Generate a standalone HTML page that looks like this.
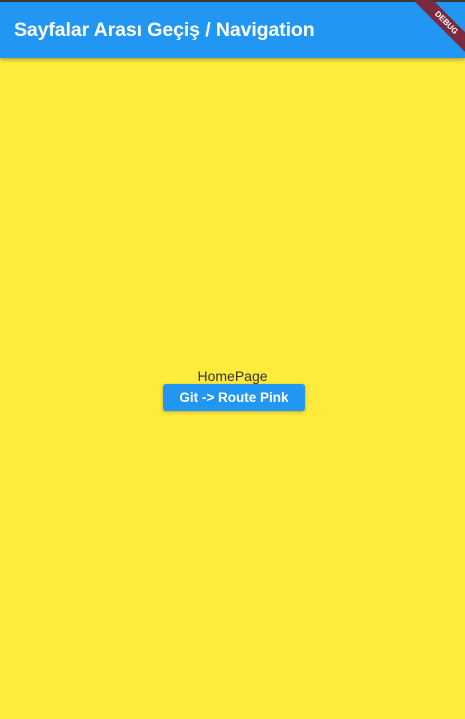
<!DOCTYPE html>
<html><head><meta charset="utf-8"><style>
html,body{margin:0;padding:0;width:465px;height:719px;overflow:hidden;background:#ffeb3b;font-family:"Liberation Sans",sans-serif;}
.status{position:absolute;top:0;left:0;width:465px;height:2px;background:#3a3a3a;}
.bar{position:absolute;top:2px;left:0;width:465px;height:56px;background:#2196f3;box-shadow:0 2px 4px rgba(0,0,0,0.3);}
.bar h1{margin:0;position:absolute;left:14px;top:17px;font-size:19.5px;font-weight:bold;color:#fff;letter-spacing:-0.1px;}
.ribbon{position:absolute;top:0;right:0;width:60px;height:60px;overflow:hidden;}
.ribbon div{position:absolute;top:16px;right:-24px;width:86px;height:14px;background:#7b2a3f;transform:rotate(45deg);color:#fff;font-size:8px;font-weight:bold;text-align:center;line-height:14px;}
.t{position:absolute;top:368px;left:0;width:465px;text-align:center;font-size:14px;color:#333;}
.btn{position:absolute;left:163px;top:384px;width:142px;height:27px;background:#2196f3;border-radius:3px;box-shadow:0 1px 3px rgba(0,0,0,0.3);color:#fff;font-weight:bold;font-size:13.5px;text-align:center;line-height:27px;}
</style></head><body>
<div class="status"></div>
<div class="bar"><h1>Sayfalar Arası Geçiş / Navigation</h1></div>
<div class="ribbon"><div>DEBUG</div></div>
<div class="t">HomePage</div>
<div class="btn">Git -&gt; Route Pink</div>
</body></html>
